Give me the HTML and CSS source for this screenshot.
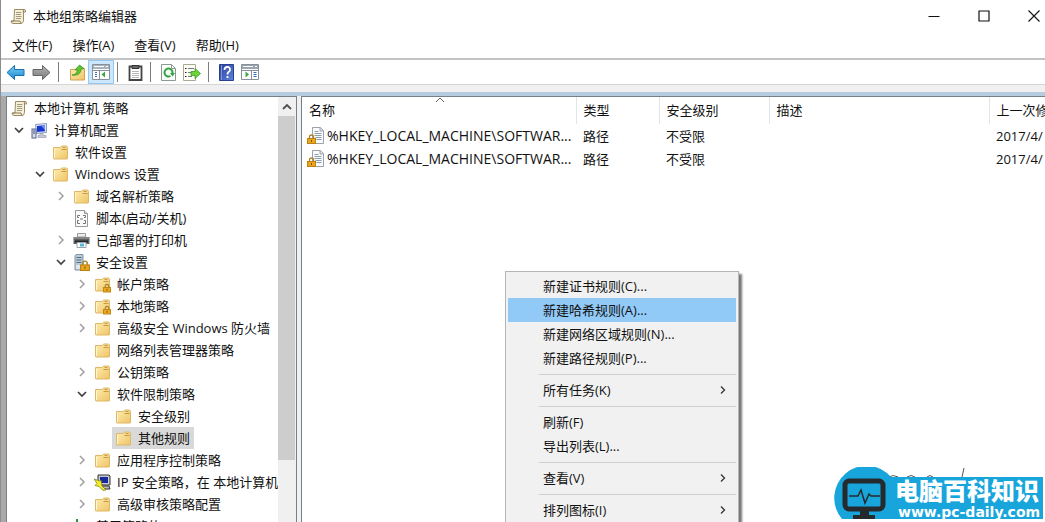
FILE: index.html
```html
<!DOCTYPE html>
<html lang="zh-CN">
<head>
<meta charset="utf-8">
<title>本地组策略编辑器</title>
<link rel="stylesheet" href="styles.css">
</head>
<body>
<svg class="defs" aria-hidden="true">
  <defs>
    <linearGradient id="gFolder" x1="0" y1="0" x2="1" y2="1"><stop offset="0" stop-color="#fdeeb0"/><stop offset="1" stop-color="#efc467"/></linearGradient>
    <linearGradient id="gBlue" x1="0" y1="0" x2="0" y2="1"><stop offset="0" stop-color="#7cd0f7"/><stop offset="1" stop-color="#1687cf"/></linearGradient>
    <linearGradient id="gGray" x1="0" y1="0" x2="0" y2="1"><stop offset="0" stop-color="#b5b5b5"/><stop offset="1" stop-color="#777"/></linearGradient>
    <linearGradient id="gHelp" x1="0" y1="0" x2="1" y2="1"><stop offset="0" stop-color="#2c3d9c"/><stop offset="1" stop-color="#5f86dc"/></linearGradient>
    <symbol id="scroll" viewBox="0 0 17 17"><path d="M4.500 1.500h9.500q2 0 1.500 2.500h-2v8.500q0 2.500-2.500 3H3q-2-.2-2-2.500h3z" fill="#f7f0d8" stroke="#9c8b62"/><path d="M1.500 13h8.500q0 2 1.500 2.500M13.500 4q-1-2 .8-2.300" fill="none" stroke="#8b7a50"/><path d="M6 4.500h5.500M6 6.500h5M6 8.500h5.500M6 10.500h5" stroke="#a39a80"/></symbol>
    <symbol id="folder" viewBox="0 0 17 17"><path d="M1.500 3.500h7l1-1.500h4.500q1.500 0 1.500 1.500v11q0 .5-.5.5h-13q-.5 0-.5-.5z" fill="url(#gFolder)" stroke="#dfb766"/><path d="M9.500 5.500h5M10.500 3.500h3" stroke="#c89a43"/><path d="M2.500 5v9" stroke="#fff6cf"/></symbol>
    <symbol id="lock" viewBox="0 0 9 10"><path d="M2.500 5V3q0-2 2-2t2 2v2" fill="none" stroke="#a98226" stroke-width="1.300"/><rect x=".5" y="4.500" width="8" height="5" fill="#e9a81d" stroke="#bd8010"/><path d="M4.500 6v2" stroke="#75500b"/></symbol>
    <symbol id="lockfolder" viewBox="0 0 17 17"><use href="#folder" width="17" height="17"/><use href="#lock" x="9" y="7" width="8" height="10"/></symbol>
    <symbol id="pc" viewBox="0 0 17 17"><path d="M4.500 2.500l11-1v9l-10 1z" fill="#dfe5f4" stroke="#8d9bc0"/><path d="M6 4l8-.7v6l-8 .7z" fill="#1937cf"/><path d="M10 3.500l4-.3v5z" fill="#6f93f3"/><path d="M9 11.500h3v2h3v2H7v-2h2z" fill="#c6cbd8" stroke="#8b91a5" stroke-width=".6"/><rect x="1" y="7" width="4" height="9" fill="#d5dbe8" stroke="#58658c"/><path d="M2 9h2M2 11h2" stroke="#41507b"/></symbol>
    <symbol id="script" viewBox="0 0 17 17"><path d="M2.500.5h9l3 3v13h-12z" fill="#fafafa" stroke="#999"/><path d="M11.500.5v3h3" fill="#ddd" stroke="#999"/><path d="M7 5.500H4.500v2H6M10 5.500h2.500v2H11M7 13.500H4.500v-3H6M10 13.500h2.500v-3H11M7 9h3" fill="none" stroke="#777"/></symbol>
    <symbol id="printer" viewBox="0 0 17 17"><path d="M4.500 1.500h8V5h-8z" fill="#eee" stroke="#9b9b9b"/><path d="M.5 5h16v7H.5z" fill="#5c6064"/><path d="M1 6h15" stroke="#aaa"/><path d="M2 9.500h13" stroke="#252729" stroke-width="2"/><path d="M4 10.500h9v5H4z" fill="#fff" stroke="#96a5b0"/><path d="M7 11.500h4v3H7z" fill="#58b6d7"/></symbol>
    <symbol id="server" viewBox="0 0 17 17"><path d="M3 .5h7v15.500H2V2z" fill="#bccbd8" stroke="#8396a6"/><path d="M3.500 3.500h5M3.500 6h5M3.500 8.500h5" stroke="#526d83"/><path d="M3 11h5v4H3z" fill="#dde7ed"/><use href="#lock" x="7" y="6" width="10" height="11"/></symbol>
    <symbol id="ipsec" viewBox="0 0 17 17"><path d="M4 1h11l1 1v9H4z" fill="#c9c9d2" stroke="#333"/><path d="M6 3h8v6H6z" fill="#172a9c"/><path d="M7 12h8l1 3H8z" fill="#bbb" stroke="#333"/><path d="M0 5l6 2 1-1 1 6 4 4-3 .5-4-4-4-1 2-2z" fill="#f2ed27" stroke="#77741a" stroke-width=".7"/></symbol>
    <symbol id="bars" viewBox="0 0 17 17"><path d="M4 1v15M9 4v12" stroke="#2f9440" stroke-width="2"/><path d="M1 6v10M13 7v9" stroke="#777" stroke-width="2"/></symbol>
    <symbol id="rule" viewBox="0 0 17 17"><path d="M5.500.5h8l3 3v13h-11z" fill="#fafbfc" stroke="#9aa3ab"/><path d="M13 .5v3.500h3.500" fill="#dce2e7" stroke="#9aa3ab"/><path d="M7.500 4.500h4M7.500 6.500h7M7.500 8.500h7M8.500 10.500h6M9.500 12.500h5" stroke="#8d9daf"/><use href="#lock" x="0" y="7" width="9" height="10"/></symbol>
    <symbol id="down" viewBox="0 0 12 12"><path d="M2 4l4 4 4-4" fill="none" stroke="#404040" stroke-width="1.700"/></symbol>
    <symbol id="right" viewBox="0 0 12 12"><path d="M4 2l4 4-4 4" fill="none" stroke="#a0a0a0" stroke-width="1.500"/></symbol>
    <symbol id="sub" viewBox="0 0 12 12"><path d="M4 2.500l3.500 3.500L4 9.500" fill="none" stroke="#333" stroke-width="1.300"/></symbol>
    <symbol id="up" viewBox="0 0 12 12"><path d="M2 8l4-4 4 4" fill="none" stroke="#505050" stroke-width="1.800"/></symbol>
  </defs>
</svg>

<header class="titlebar">
  <svg class="icon" aria-hidden="true"><use href="#scroll"/></svg>
  <h1>本地组策略编辑器</h1>
  <div class="winbtns">
    <button aria-label="最小化"><svg width="12" height="12"><path d="M.5 6.500h11" stroke="#111"/></svg></button>
    <button aria-label="最大化"><svg width="12" height="12"><path d="M1 1h10v10H1z" fill="none" stroke="#111" stroke-width="1.200"/></svg></button>
    <button aria-label="关闭"><svg width="12" height="12"><path d="M.5.5l11 11M11.500.5l-11 11" stroke="#111" stroke-width="1.100"/></svg></button>
  </div>
</header>
<nav class="menubar">
  <button>文件(F)</button><button>操作(A)</button><button>查看(V)</button><button>帮助(H)</button>
</nav>
<div class="toolbar">
  <button aria-label="后退"><svg width="19" height="17" viewBox="0 0 19 17"><path d="M1 8.500l7.500-7v4H18v6H8.500v4z" fill="url(#gBlue)" stroke="#1870ac"/></svg></button>
  <button aria-label="前进"><svg width="19" height="17" viewBox="0 0 19 17"><path d="M18 8.500l-7.500-7v4H1v6h9.500v4z" fill="url(#gGray)" stroke="#666"/></svg></button>
  <i class="sep"></i>
  <button aria-label="向上"><svg width="17" height="17"><path d="M1.500 5.500h5l1-1h8v11.500h-14z" fill="url(#gFolder)" stroke="#d0a352"/><path d="M3 11c3 0 5-2 5.500-5L6 6l4.500-5L15 4.500l-3 .7C12 9 9 12 3 11z" fill="#5ec430" stroke="#2f8c1c" stroke-width=".7"/></svg></button>
  <button class="pressed" aria-label="显示/隐藏控制台树"><svg width="18" height="16"><path d="M.5.500h17v15H.5z" fill="#fff" stroke="#87909a"/><path d="M1 1h16v4H1z" fill="#a9b3bf"/><path d="M2 2.500h10M14 2.500h2" stroke="#fff"/><path d="M1 6.500h16M7.500 6v9" stroke="#87909a"/><path d="M3 8.500h2M3 10.500h2M3 12.500h2" stroke="#4070a8"/><path d="M13 7.500v6l-3.500-3z" fill="#39a93c"/></svg></button>
  <i class="sep"></i>
  <button aria-label="粘贴"><svg width="15" height="17"><path d="M1.500 2.500h12v13.500h-12z" fill="#fff" stroke="#444" stroke-width="1.800"/><path d="M4 1.500h7v3H4z" fill="#666" stroke="#333"/><path d="M4 7.500h7M4 9.500h7M4 11.500h7M4 13.500h7" stroke="#b7b7b7"/></svg></button>
  <i class="sep"></i>
  <button aria-label="刷新"><svg width="15" height="17"><path d="M.5.500h10l4 4v12H.5z" fill="#fbfffb" stroke="#8b9a91"/><path d="M10.500.5v4h4" fill="none" stroke="#8b9a91"/><path d="M9.500 12A4 4 0 1 1 11.500 9" fill="none" stroke="#35a243" stroke-width="2"/><path d="M9 9h5l-2.500 3.500z" fill="#35a243"/></svg></button>
  <button aria-label="导出列表"><svg width="18" height="17"><path d="M.5.500h12v16H.5z" fill="#fffef3" stroke="#a6aa98"/><path d="M5 4.500h6M5 8.500h4M5 12.500h4" stroke="#6d7893"/><path d="M2 4.500h1.500M2 8.500h1.500M2 12.500h1.500" stroke="#222"/><path d="M8 7.500h4V4.500l5.500 5-5.500 5v-3H8z" fill="#6dd33b" stroke="#399b22" stroke-width=".8"/></svg></button>
  <i class="sep"></i>
  <button aria-label="帮助"><svg width="15" height="17"><path d="M.5.500h14v16H.5z" fill="url(#gHelp)" stroke="#27408f"/><path d="M2.500 1v15" stroke="#8097dc"/><path d="M5.500 6q0-3 2.800-3t2.700 2.700q0 1.500-1.500 2.400-1 .6-1 2.400M8.500 12v2" fill="none" stroke="#fff" stroke-width="1.800"/></svg></button>
  <button aria-label="显示/隐藏操作窗格"><svg width="18" height="16"><path d="M.5.500h17v15H.5z" fill="#fff" stroke="#87909a"/><path d="M1 1h16v4H1z" fill="#9ba5b1"/><path d="M2 2.500h10M14 2.500h2" stroke="#fff"/><path d="M1 6.500h16M10.500 6v9" stroke="#87909a"/><path d="M12.500 8.500h3M12.500 10.500h3M12.500 12.500h3" stroke="#3d71b4"/><path d="M4.500 7.500v6l3.500-3z" fill="#39a93c"/></svg></button>
</div>

<main class="workspace">
  <section class="treepane">
    <div class="tree">
      <div class="row root"><span class="node"><svg class="icon"><use href="#scroll"/></svg>本地计算机 策略</span></div>
      <ul>
        <li><div class="row"><svg class="chev"><use href="#down"/></svg><span class="node"><svg class="icon"><use href="#pc"/></svg>计算机配置</span></div>
        <ul>
          <li><div class="row"><i class="chev"></i><span class="node"><svg class="icon"><use href="#folder"/></svg>软件设置</span></div></li>
          <li><div class="row"><svg class="chev"><use href="#down"/></svg><span class="node"><svg class="icon"><use href="#folder"/></svg>Windows 设置</span></div>
          <ul>
            <li><div class="row"><svg class="chev"><use href="#right"/></svg><span class="node"><svg class="icon"><use href="#folder"/></svg>域名解析策略</span></div></li>
            <li><div class="row"><i class="chev"></i><span class="node"><svg class="icon"><use href="#script"/></svg>脚本(启动/关机)</span></div></li>
            <li><div class="row"><svg class="chev"><use href="#right"/></svg><span class="node"><svg class="icon"><use href="#printer"/></svg>已部署的打印机</span></div></li>
            <li><div class="row"><svg class="chev"><use href="#down"/></svg><span class="node"><svg class="icon"><use href="#server"/></svg>安全设置</span></div>
            <ul>
              <li><div class="row"><svg class="chev"><use href="#right"/></svg><span class="node"><svg class="icon"><use href="#lockfolder"/></svg>帐户策略</span></div></li>
              <li><div class="row"><svg class="chev"><use href="#right"/></svg><span class="node"><svg class="icon"><use href="#lockfolder"/></svg>本地策略</span></div></li>
              <li><div class="row"><svg class="chev"><use href="#right"/></svg><span class="node"><svg class="icon"><use href="#folder"/></svg>高级安全 Windows 防火墙</span></div></li>
              <li><div class="row"><i class="chev"></i><span class="node"><svg class="icon"><use href="#folder"/></svg>网络列表管理器策略</span></div></li>
              <li><div class="row"><svg class="chev"><use href="#right"/></svg><span class="node"><svg class="icon"><use href="#folder"/></svg>公钥策略</span></div></li>
              <li><div class="row"><svg class="chev"><use href="#down"/></svg><span class="node"><svg class="icon"><use href="#folder"/></svg>软件限制策略</span></div>
              <ul>
                <li><div class="row"><i class="chev"></i><span class="node"><svg class="icon"><use href="#folder"/></svg>安全级别</span></div></li>
                <li><div class="row"><i class="chev"></i><span class="node selected"><svg class="icon"><use href="#folder"/></svg>其他规则</span></div></li>
              </ul></li>
              <li><div class="row"><svg class="chev"><use href="#right"/></svg><span class="node"><svg class="icon"><use href="#folder"/></svg>应用程序控制策略</span></div></li>
              <li><div class="row"><svg class="chev"><use href="#right"/></svg><span class="node"><svg class="icon"><use href="#ipsec"/></svg>IP 安全策略，在 本地计算机</span></div></li>
              <li><div class="row"><svg class="chev"><use href="#right"/></svg><span class="node"><svg class="icon"><use href="#folder"/></svg>高级审核策略配置</span></div></li>
            </ul></li>
            <li><div class="row"><i class="chev"></i><span class="node"><svg class="icon"><use href="#bars"/></svg>基于策略的 QoS</span></div></li>
          </ul></li>
        </ul></li>
      </ul>
    </div>
    <div class="scrollbar">
      <button aria-label="向上滚动"><svg width="12" height="12"><use href="#up"/></svg></button>
      <div class="thumb"></div>
    </div>
  </section>

  <section class="listpane">
    <table>
      <colgroup><col class="c-name"><col class="c-type"><col class="c-level"><col class="c-desc"><col></colgroup>
      <thead><tr>
        <th class="sorted">名称<svg class="sortmark" width="10" height="6"><path d="M1 5l4-4 4 4" fill="none" stroke="#666"/></svg></th>
        <th>类型</th><th>安全级别</th><th>描述</th><th>上一次修</th>
      </tr></thead>
      <tbody>
        <tr><td class="name"><div><svg class="icon"><use href="#rule"/></svg>%HKEY_LOCAL_MACHINE\SOFTWAR...</div></td><td>路径</td><td>不受限</td><td></td><td>2017/4/</td></tr>
        <tr><td class="name"><div><svg class="icon"><use href="#rule"/></svg>%HKEY_LOCAL_MACHINE\SOFTWAR...</div></td><td>路径</td><td>不受限</td><td></td><td>2017/4/</td></tr>
      </tbody>
    </table>
  </section>
</main>

<div class="context" role="menu">
  <button role="menuitem">新建证书规则(C)...</button>
  <button role="menuitem" class="hot">新建哈希规则(A)...</button>
  <button role="menuitem">新建网络区域规则(N)...</button>
  <button role="menuitem">新建路径规则(P)...</button>
  <hr>
  <button role="menuitem">所有任务(K)<svg width="12" height="12"><use href="#sub"/></svg></button>
  <hr>
  <button role="menuitem">刷新(F)</button>
  <button role="menuitem">导出列表(L)...</button>
  <hr>
  <button role="menuitem">查看(V)<svg width="12" height="12"><use href="#sub"/></svg></button>
  <hr>
  <button role="menuitem">排列图标(I)<svg width="12" height="12"><use href="#sub"/></svg></button>
</div>

<div class="brand">
  <svg width="212" height="53" viewBox="0 0 212 53" aria-hidden="true">
    <path d="M56 10q4-3 9 0M74 10q4-3 8 0M94 10q3-3 6 0M129 10l2-9" fill="none" stroke="#555"/>
    <path d="M9 52A30 30 0 1 1 58 10h152v42z" fill="#17a5dc"/>
    <rect x="12" y="14" width="38" height="28" rx="4" fill="none" stroke="#252a2d" stroke-width="5"/>
    <path d="M27 43h9v5h6v4H20v-4h7z" fill="#252a2d"/>
    <path d="M16 29h9l3-6 4 13 4-9 2 2h9" fill="none" stroke="#252a2d" stroke-width="1.500"/>
  </svg>
  <div class="brandtext"><strong>电脑百科知识</strong><span>www.pc-daily.com</span></div>
</div>
</body>
</html>
```
FILE: styles.css
```css
* { box-sizing: border-box; }

body {
  margin: 0;
  height: 100vh;
  display: flex;
  flex-direction: column;
  overflow: hidden;
  position: relative;
  background: #fff;
  border-left: 1px solid #8c8c8c;
  color: #111;
  font: 13px/22px "Open Sans", "Noto Sans CJK SC", sans-serif;
}

button {
  border: 0;
  padding: 0;
  background: none;
  color: inherit;
  font: inherit;
}

svg { display: block; flex: none; }
.defs { position: absolute; width: 0; height: 0; }
.icon { width: 17px; height: 17px; }

.titlebar {
  display: flex;
  align-items: center;
  gap: 6px;
  height: 32px;
  flex: none;
  padding-left: 9px;
}
.titlebar h1 { margin: 0; font-size: 13px; font-weight: 400; }
.winbtns { margin-left: auto; display: flex; gap: 38px; padding-right: 5px; }

.menubar {
  display: flex;
  gap: 20px;
  height: 28px;
  flex: none;
  align-items: center;
  padding-left: 11px;
  border-bottom: 2px solid #c3c3c3;
}

.toolbar {
  display: flex;
  align-items: center;
  height: 25px;
  flex: none;
  padding-left: 5px;
  gap: 7px;
  border-bottom: 1px solid #d5d5d5;
}
.toolbar .sep { width: 1px; height: 20px; background: #7d7d7d; }
.toolbar .sep + button { margin-left: 3px; }
.toolbar .pressed {
  margin: 0 -4px 0 -5px;
  padding: 3px;
  background: #cce6fb;
  border: 1px solid #93c8f3;
}

.workspace {
  display: flex;
  flex: 1;
  min-height: 0;
  gap: 4px;
  padding: 4px 0 0 5px;
  margin-top: 7px;
  background: linear-gradient(#b5cbe0 4px, #f0f0f0 4px);
  box-shadow: 0 -7px #f0f0f0;
}
.treepane {
  display: flex;
  flex: none;
  width: 291px;
  border: 1px solid #777f88;
  border-bottom: 0;
  background: #fff;
  box-shadow: -5px 0 #a9a9a9;
}
.tree { flex: 1; min-width: 0; overflow: hidden; white-space: nowrap; }
.tree ul { margin: 0; padding: 0; list-style: none; }
.tree > ul { padding-left: 6px; }
.tree ul ul { padding-left: 21px; }
.row { display: flex; align-items: center; height: 22px; }
.root { padding-left: 4px; }
.chev { width: 12px; height: 12px; margin-right: 6px; flex: none; }
.node { display: flex; align-items: center; gap: 6px; height: 22px; }
.selected { margin: 0 -4px 0 -3px; padding: 0 4px 0 3px; background: #d9d9d9; }

.scrollbar { width: 18px; padding-right: 1px; background: #f0f0f0; display: flex; flex-direction: column; }
.scrollbar button { height: 19px; display: grid; place-items: center; flex: none; }
.thumb { height: 81%; background: #cdcdcd; }

.listpane { flex: 1; min-width: 0; border: 1px solid #777f88; border-width: 1px 0 0 1px; background: #fff; overflow: hidden; }
table { width: 100%; table-layout: fixed; border-collapse: collapse; }
.c-name { width: 274px; }
.c-type { width: 83px; }
.c-level { width: 110px; }
.c-desc { width: 220px; }
th, td { padding: 0 0 0 7px; text-align: left; font-weight: 400; white-space: nowrap; overflow: hidden; height: 23px; line-height: 22px; }
th { height: 27px; padding-bottom: 2px; border-right: 1px solid #e1e5ea; position: relative; }
th:last-child { border-right: 0; }
.sortmark { position: absolute; top: 0; left: calc(50% - 4px); }
td.name { padding-left: 5px; font-size: 14px; }
td.name div { display: flex; align-items: center; gap: 3px; }

.context {
  position: absolute;
  left: 504px;
  top: 271px;
  width: 234px;
  padding: 2px;
  background: #f1f1f1;
  border: 1px solid #b5b5b5;
  box-shadow: 3px 3px 2px #777;
}
.context button {
  display: flex;
  align-items: center;
  justify-content: space-between;
  width: 100%;
  height: 24px;
  padding: 0 7px 0 35px;
}
.context .hot { background: #91c9f7; }
.context hr { margin: 4px 0 3px 31px; border: 0; height: 1px; background: #cfcfcf; }

.brand { position: absolute; right: 0; bottom: 2px; }
.brandtext {
  position: absolute;
  left: 62px;
  top: 9px;
  display: flex;
  flex-direction: column;
  color: #fff;
  white-space: nowrap;
}
.brandtext strong { font: 900 24px/28px "Noto Sans CJK SC", sans-serif; }
.brandtext span { font: bold 14px/16px "DejaVu Sans", sans-serif; padding-left: 3px; }
```
